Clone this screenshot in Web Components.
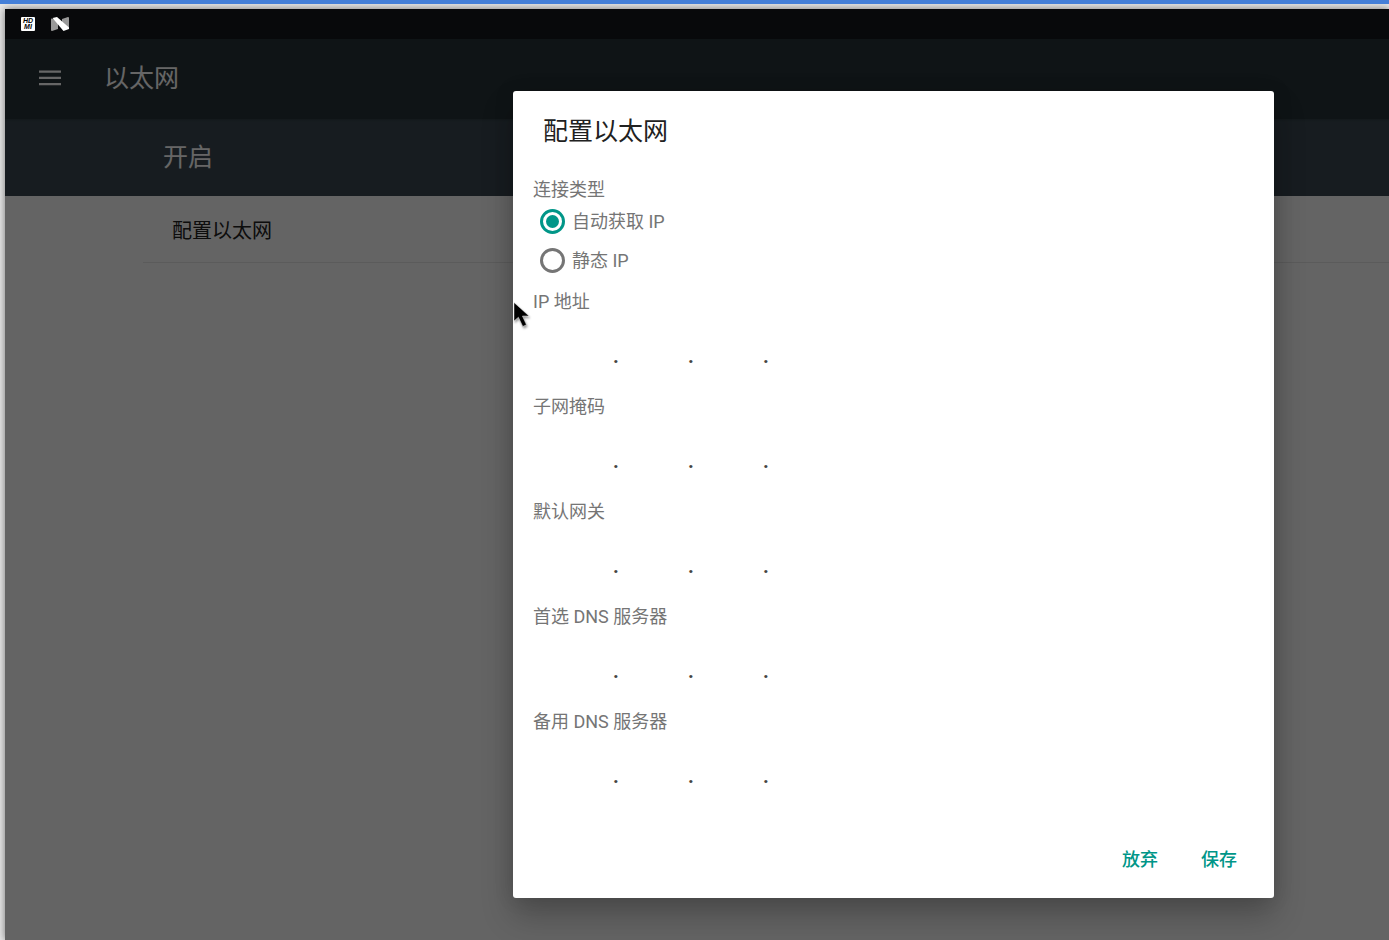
<!DOCTYPE html>
<html lang="zh-CN">
<head>
<meta charset="utf-8">
<title>以太网</title>
<style>
body { margin: 0; font-family: Roboto, "Noto Sans CJK SC", sans-serif; }
</style>
</head>
<body>
<settings-window>
  <status-bar slot="status"></status-bar>
  <settings-screen slot="screen" heading="以太网" state="开启">
    <settings-row>配置以太网</settings-row>
  </settings-screen>
  <ethernet-dialog slot="dialog" heading="配置以太网">
    <connection-type label="连接类型"></connection-type>
    <ip-field label="IP 地址"></ip-field>
    <ip-field label="子网掩码"></ip-field>
    <ip-field label="默认网关"></ip-field>
    <ip-field label="首选 DNS 服务器"></ip-field>
    <ip-field label="备用 DNS 服务器"></ip-field>
    <flat-button slot="actions">放弃</flat-button>
    <flat-button slot="actions">保存</flat-button>
  </ethernet-dialog>
</settings-window>
<script>
class BaseElement extends HTMLElement {
  connectedCallback() {
    if (this.shadowRoot) return;
    this.attachShadow({ mode: 'open' }).innerHTML =
      '<style>*{box-sizing:border-box}' + this.styles() + '</style>' + this.markup();
  }
}

customElements.define('settings-window', class extends BaseElement {
  styles() { return `
    :host { display: block; border-top: 4px solid #447fd8; }
    .frame { padding: 5px 0 0 5px; background: #e8e8e8; overflow: hidden; min-height: calc(100vh - 4px); display: grid; }
    .device { display: grid; grid-template-rows: 30px 1fr; grid-template-columns: minmax(0, 1fr); box-shadow: 0 0 8px rgba(0,0,0,.5); background: #646464; }
    .stack { display: grid; grid-template-columns: minmax(0, 1fr); overflow: hidden; }
    .stack > * { grid-area: 1 / 1; }
    .scrim { background: rgba(0,0,0,.6); padding: 52px 115px 42px 24px; display: flex; justify-content: flex-end; align-items: flex-start; z-index: 1; }`; }
  markup() { return `
    <div class="frame"><div class="device">
      <slot name="status"></slot>
      <div class="stack">
        <slot name="screen"></slot>
        <div class="scrim"><slot name="dialog"></slot></div>
      </div>
    </div></div>`; }
});

customElements.define('status-bar', class extends BaseElement {
  styles() { return `
    :host { display: flex; align-items: center; gap: 16px; padding-left: 16px; background: #08090b; }
    .hdmi { width: 14px; height: 14px; padding-top: 1px; background: #fff; color: #000; border-radius: 1px; font: italic 700 7px/6px "Liberation Sans", sans-serif; text-align: center; }
    .hdmi span { display: block; height: 6px; }
    svg { display: block; }`; }
  markup() { return `
    <div class="hdmi"><span>HD</span><span>MI</span></div>
    <svg width="18" height="14" viewBox="0 0 18 14" aria-hidden="true">
      <path d="M0 1.5 7 3V12L1 14 0 13.5Z" fill="#999"/>
      <path d="M11 2 17 0 18 .6V12L11 10Z" fill="#999"/>
      <path d="M1.5 1 6 0 18 10.5V12L12.5 14Z" fill="#fff"/>
    </svg>`; }
});

customElements.define('settings-screen', class extends BaseElement {
  styles() { return `
    :host { grid-area: 1 / 1; display: block; background: #fafafa; color: #fff; }
    header { height: 80px; background: #263238; display: flex; align-items: center; padding-left: 34px; gap: 43px; }
    button { border: 0; padding: 0; background: none; width: 22px; height: 24px; }
    svg { display: block; }
    h1 { margin: 0; font-size: 25px; line-height: 32px; font-weight: 400; }
    .state { height: 77px; background: linear-gradient(#303f46, #3a4850 3px); display: flex; align-items: center; padding-left: 158px; font-size: 25px; line-height: 32px; }
    .rows { margin-left: 138px; }`; }
  markup() { return `
    <header>
      <button aria-label="菜单"><svg width="22" height="24" viewBox="0 0 22 24"><path d="M0 3.6h22v2.2H0zM0 9.8h22v2.2H0zM0 16h22v2.2H0z" fill="#fff"/></svg></button>
      <h1>${this.getAttribute('heading')}</h1>
    </header>
    <div class="state">${this.getAttribute('state')}</div>
    <div class="rows"><slot></slot></div>`; }
});

customElements.define('settings-row', class extends BaseElement {
  styles() { return `
    :host { display: flex; align-items: center; height: 67px; box-sizing: border-box; padding: 3px 0 0 29px; border-bottom: 1px solid #e4e4e4; color: #212121; font-size: 20px; line-height: 24px; }`; }
  markup() { return `<slot></slot>`; }
});

customElements.define('ethernet-dialog', class extends BaseElement {
  styles() { return `
    :host { position: relative; display: block; box-sizing: border-box; flex: 0 1 761px; min-width: 0; padding: 25px 19px 14px 20px; background: #fff; border-radius: 3px; box-shadow: 0 18px 32px rgba(0,0,0,.24), 0 0 20px rgba(0,0,0,.12); }
    h2 { margin: 0 0 30px 10px; font-size: 25px; line-height: 32px; font-weight: 400; color: #212121; }
    .actions { margin-top: 21px; display: flex; justify-content: flex-end; gap: 7px; }
    .pointer { position: absolute; left: 0; top: 210px; filter: drop-shadow(1px 2px 1px rgba(0,0,0,.4)); }`; }
  markup() { return `
    <h2>${this.getAttribute('heading')}</h2>
    <slot></slot>
    <div class="actions"><slot name="actions"></slot></div>
    <svg class="pointer" width="18" height="28" viewBox="0 0 18 28" aria-hidden="true"><path d="M1 1.5V20L5.4 16.2 9.8 25.4 13.4 23.8 9.4 15H16Z" fill="#000" stroke="#fff" stroke-opacity=".6" stroke-width=".7"/></svg>`; }
});

customElements.define('connection-type', class extends BaseElement {
  styles() { return `
    :host { display: block; color: #757575; font-size: 18px; line-height: 24px; margin-bottom: 10px; }
    fieldset { border: 0; margin: 0; padding: 0; min-width: 0; }
    legend { padding: 0; }
    label { display: flex; align-items: center; height: 39px; padding-left: 7px; gap: 7px; }
    input { appearance: none; margin: 0; width: 25px; height: 25px; border: 3px solid #757575; border-radius: 50%; display: grid; place-items: center; }
    input:checked { border-color: #009688; }
    input:checked::before { content: ""; width: 13px; height: 13px; border-radius: 50%; background: #009688; }`; }
  markup() { return `
    <fieldset>
      <legend>${this.getAttribute('label')}</legend>
      <label><input type="radio" name="type" checked>自动获取 IP</label>
      <label><input type="radio" name="type">静态 IP</label>
    </fieldset>`; }
});

customElements.define('ip-field', class extends BaseElement {
  styles() { return `
    :host { display: grid; grid-template-rows: 24px 81px; color: #757575; font-size: 18px; line-height: 24px; }
    .parts { display: flex; align-items: center; padding: 2px 0 0 10px; color: #444; font-size: 20px; font-weight: 700; }
    .parts span { width: 5px; text-align: center; }
    input { width: 70px; height: 45px; border: 0; padding: 0; background: none; color: inherit; font: inherit; text-align: center; outline: 0; }`; }
  markup() {
    const label = this.getAttribute('label');
    const part = n => `<input ${n === 1 ? 'id="first"' : `aria-label="${label} ${n}"`} inputmode="numeric" maxlength="3" disabled>`;
    return `<label for="first">${label}</label>
    <div class="parts">${[1, 2, 3, 4].map(part).join('<span>.</span>')}</div>`; }
});

customElements.define('flat-button', class extends BaseElement {
  styles() { return `
    :host { display: block; }
    button { height: 48px; padding: 0 18px; border: 0; background: none; color: #009688; font: inherit; font-size: 18px; font-weight: 500; line-height: 24px; }`; }
  markup() { return `<button><slot></slot></button>`; }
});
</script>
</body>
</html>
